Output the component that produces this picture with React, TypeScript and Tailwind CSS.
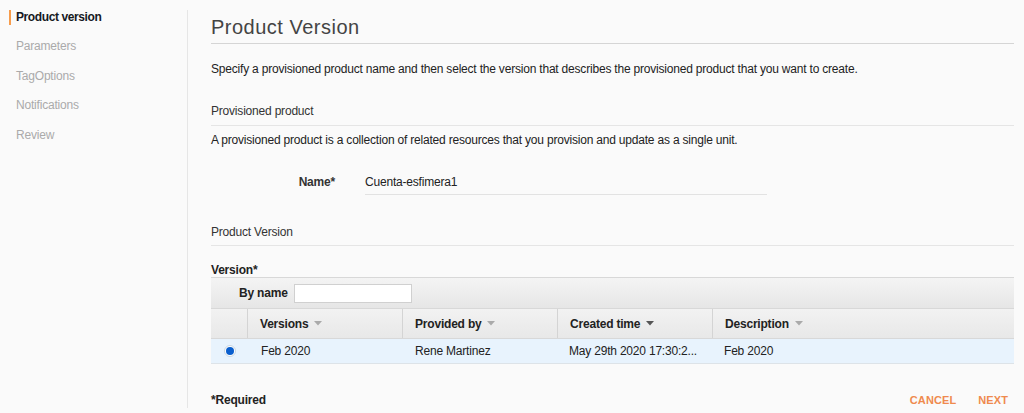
import React from "react";

function Caret({ dark }: { dark?: boolean }) {
  return (
    <svg width="8" height="5" viewBox="0 0 8 5" className="ml-[6px] inline-block">
      <path d="M0 0 L8 0 L4 4.5 Z" fill={dark ? "#555" : "#aaa"} />
    </svg>
  );
}

export default function App() {
  const nav = ["Parameters", "TagOptions", "Notifications", "Review"];
  return (
    <div
      className="flex w-[1024px] h-[413px] bg-[#fafafa] text-[#16191f] overflow-hidden tracking-[-0.2px]"
      style={{ fontFamily: "'Liberation Sans', Arial, sans-serif" }}
    >
      <div className="w-[187px] shrink-0 pt-[9px]">
        <div className="flex items-center h-[16px] pl-[9px]">
          <div className="w-[2px] h-[15px] bg-[#f79c4c]" />
          <span className="ml-[5px] text-[12px] font-bold text-[#16191f] tracking-[-0.4px]">Product version</span>
        </div>
        <div className="flex flex-col pl-[16px] mt-[14px] gap-[14.5px]">
          {nav.map((n) => (
            <div key={n} className="h-[15px] leading-[15px] text-[12px] text-[#aaaaaa]">
              {n}
            </div>
          ))}
        </div>
      </div>
      <div className="w-px bg-[#e6e6e6] mt-[10px] mb-[5px] shrink-0" />
      <div className="flex-1 pl-[23px] pr-[10px] flex flex-col">
        <div className="h-[44px] border-b border-[#d5d5d5] flex items-end pb-[4px]">
          <h1 className="text-[20px] leading-[24px] text-[#444] tracking-[0.5px]">Product Version</h1>
        </div>
        <p className="mt-[18px] text-[12px] leading-[15px] text-[#222]">
          Specify a provisioned product name and then select the version that describes the provisioned product that you want to create.
        </p>
        <div className="mt-[27px] h-[22px] border-b border-[#e5e5e5] text-[12px] leading-[15px] text-[#333]">
          Provisioned product
        </div>
        <p className="mt-[7px] text-[12px] leading-[15px] text-[#222]">
          A provisioned product is a collection of related resources that you provision and update as a single unit.
        </p>
        <div className="mt-[27px] flex items-start">
          <div className="w-[124px] text-right text-[12px] font-bold leading-[15px] text-[#333]">Name*</div>
          <div className="ml-[30px] w-[402px] h-[20px] border-b border-[#e2e2e2] text-[12px] leading-[15px] text-[#222]">
            Cuenta-esfimera1
          </div>
        </div>
        <div className="mt-[30px] h-[21px] border-b border-[#e5e5e5] text-[12px] leading-[15px] text-[#333]">
          Product Version
        </div>
        <div className="mt-[17px] text-[12px] font-bold leading-[14px] text-[#222]">Version*</div>
        <div className="border-t border-[#d8d8d8]">
          <div className="h-[31px] flex items-center pl-[28px] bg-gradient-to-b from-[#f4f4f4] to-[#e6e6e6] border-b border-[#d8d8d8]">
            <span className="text-[12px] font-bold text-[#222]">By name</span>
            <div className="ml-[6px] w-[118px] h-[19px] bg-white border border-[#d0d0d0]" />
          </div>
          <div className="h-[30px] flex bg-gradient-to-b from-[#f2f2f2] to-[#e8e8e8] border-b border-[#d8d8d8] text-[12px] font-bold text-[#222]">
            <div className="w-[37px] border-r border-[#d4d4d4]" />
            <div className="w-[155px] pl-[12px] flex items-center border-r border-[#d4d4d4]">
              Versions<Caret />
            </div>
            <div className="w-[155px] pl-[12px] flex items-center border-r border-[#d4d4d4]">
              Provided by<Caret />
            </div>
            <div className="w-[155px] pl-[12px] flex items-center border-r border-[#d4d4d4]">
              Created time<Caret dark />
            </div>
            <div className="flex-1 pl-[12px] flex items-center">
              Description<Caret />
            </div>
          </div>
          <div className="h-[25px] flex items-center bg-[#e8f3fd] border-b border-[#dde3e8] text-[12px] text-[#222]">
            <div className="w-[37px] flex justify-center">
              <div className="w-[12px] h-[12px] rounded-full bg-white border border-[#c9d6e2] flex items-center justify-center">
                <div className="w-[8px] h-[8px] rounded-full bg-[#0a5fce]" />
              </div>
            </div>
            <div className="w-[155px] pl-[13px]">Feb 2020</div>
            <div className="w-[155px] pl-[12px]">Rene Martinez</div>
            <div className="w-[155px] pl-[11px]">May 29th 2020 17:30:2...</div>
            <div className="flex-1 pl-[11px]">Feb 2020</div>
          </div>
        </div>
        <div className="mt-[27px] flex items-center justify-between">
          <span className="text-[12px] font-bold text-[#222]">*Required</span>
          <div className="flex gap-[22px] pr-[6px] text-[11px] font-bold text-[#ef8a4e] tracking-[0.1px]">
            <span>CANCEL</span>
            <span>NEXT</span>
          </div>
        </div>
      </div>
    </div>
  );
}
